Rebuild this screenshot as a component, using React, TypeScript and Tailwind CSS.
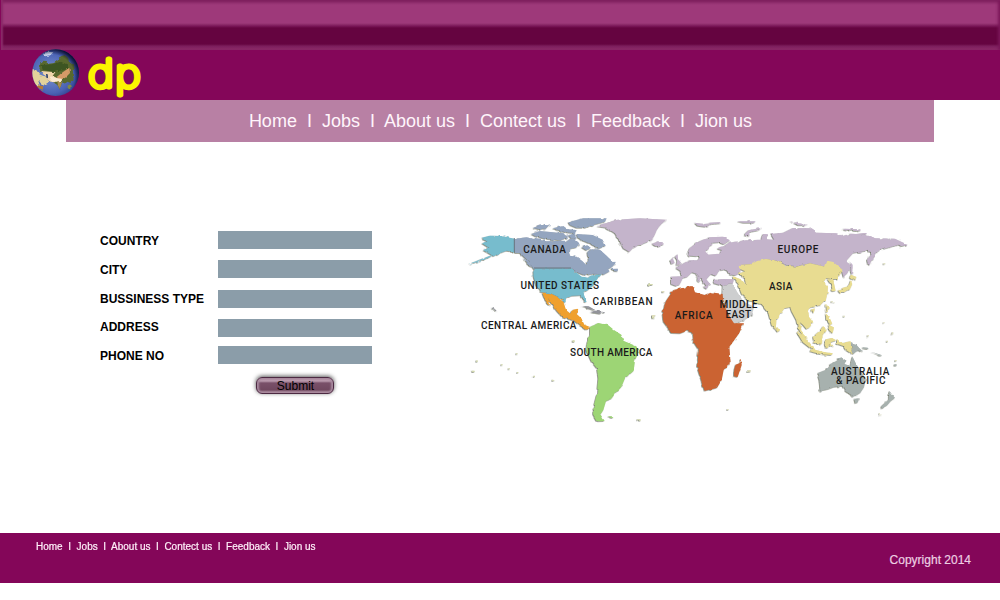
import React from "react";

const links = "Home  I  Jobs  I  About us  I  Contect us  I  Feedback  I  Jion us";

const labels = ["COUNTRY", "CITY", "BUSSINESS TYPE", "ADDRESS", "PHONE NO"];

function Globe() {
  return (
    <svg className="block h-12 w-12 shrink-0" viewBox="0 0 144 144">
      <defs>
        <radialGradient id="sea" cx="40%" cy="50%" r="60%">
          <stop offset="0" stopColor="#7e96d2" />
          <stop offset=".7" stopColor="#4a62b4" />
          <stop offset="1" stopColor="#2a3a86" />
        </radialGradient>
        <radialGradient id="shade" cx="40%" cy="60%" r="64%">
          <stop offset=".76" stopColor="#050824" stopOpacity="0" />
          <stop offset=".98" stopColor="#050824" stopOpacity=".95" />
        </radialGradient>
        <clipPath id="disc"><circle cx="71" cy="71" r="70" /></clipPath>
        <filter id="land" x="-10%" y="-10%" width="120%" height="120%">
          <feTurbulence type="fractalNoise" baseFrequency=".09" numOctaves="2" seed="4" />
          <feDisplacementMap in="SourceGraphic" scale="9" xChannelSelector="R" yChannelSelector="G" />
          <feGaussianBlur stdDeviation="1.3" />
        </filter>
      </defs>
      <g clipPath="url(#disc)">
        <rect width="144" height="144" fill="url(#sea)" />
        <g filter="url(#land)">
          <path d="M32 15L48 8L64 10L56 18L40 22Z" fill="#c3cfea" />
          <path d="M24 44L32 35L44 36L50 44L66 42L78 34L86 22L98 18L108 26L112 38L122 44L128 56L122 64L126 78L124 92L116 102L106 98L98 106L90 100L84 122L76 108L64 100L50 90L34 74L22 62Z" fill="#59692f" />
          <path d="M28 48L60 46L86 38L104 46L110 58L94 64L62 68L32 62Z" fill="#3c5420" />
          <path d="M0 60L12 62L22 76L36 82L50 94L46 106L36 110L28 104L18 92L24 112L12 108L0 94Z" fill="#e3d29b" />
          <path d="M28 66L54 68L70 70L62 80L76 88L68 100L56 98L42 88Z" fill="#f0d5ac" />
          <path d="M74 84L92 70L112 56L114 72L100 86L84 94Z" fill="#d69a68" />
          <path d="M52 82L70 86L92 90L82 98L62 98Z" fill="#fae9d0" />
          <path d="M76 96L90 98L84 120L78 110Z" fill="#a88a4c" />
          <path d="M14 108L34 112L32 122L20 118Z" fill="#b57a35" />
          <path d="M104 112L114 106L120 112L110 120Z" fill="#7f8a45" />
          <path d="M42 74L47 76L48 88L43 86Z" fill="#2c4268" />
        </g>
        <rect width="144" height="144" fill="url(#shade)" />
      </g>
    </svg>
  );
}

function WorldMap() {
  return (
    <svg className="block h-[220px] w-[460px] shrink-0" viewBox="0 0 460 220" fontFamily="Roboto, sans-serif" fontSize="10" fontWeight="500" fill="#1a1a1a">
      <defs>
        <filter id="coast" x="-5%" y="-5%" width="110%" height="110%">
          <feTurbulence type="fractalNoise" baseFrequency=".22" numOctaves="2" seed="8" />
          <feDisplacementMap in="SourceGraphic" scale="3" xChannelSelector="R" yChannelSelector="G" result="edge" />
          <feDropShadow in="edge" dx="-.7" dy=".6" stdDeviation=".35" floodColor="#424b35" floodOpacity=".8" />
        </filter>
      </defs>
      <g filter="url(#coast)">
        <g transform="scale(.33333)">
          <g fill="#77bccd">
            <path d="M66 83L90 77L125 78L163 86V125L140 122L120 128L101 139L84 128L70 121L85 112L66 100L82 95Z" />
            <path d="M101 135L84 144L64 151L44 158L28 161L50 153L78 141Z" />
            <path d="M220 175H335L350 188L365 200L385 203L400 195L425 193L411 208L402 225L384 240L370 249L380 277L374 276L360 256L335 257L318 267L315 279L298 262L270 249L242 246L228 225L221 200Z" />
          </g>
          <g fill="#94a5bf">
            <path d="M163 86L200 82L230 88L260 94L320 92L345 88L358 100L350 112L334 116L328 126L330 137L350 140L367 153L379 165L386 150L382 130L395 118L420 119L440 137L454 151L468 158L456 171L440 179L425 193L400 191L375 196L355 188L335 175H220L205 153L181 130L163 125Z" />
            <path d="M325 37L370 25L440 25L435 35L400 44L376 53L350 53L330 45Z" />
            <path d="M350 72L398 75L428 89L437 107L415 116L398 104L374 94L354 85Z" />
            <path d="M214 72L240 63L280 67L309 70L325 82L300 91L256 86L226 79Z" />
            <path d="M220 53L245 45L270 46L262 54L238 58ZM278 55L310 48L323 58L350 60L345 69L316 67ZM324 77L345 69L350 82L335 89ZM365 112L382 106L393 114L379 121Z" />
            <path d="M420 183L444 177L449 184L430 194ZM453 177L474 176L473 184L458 183ZM190 145L210 158L217 173L202 162Z" />
          </g>
          <g fill="#c4b4cb">
            <path d="M412 49L440 38L471 29L540 25L618 29L602 44L592 56L584 75L574 91L545 103L521 112L508 125L490 115L480 94L465 70L440 53Z" />
            <path d="M576 101L591 96L613 101L602 109L586 108Z" />
          </g>
          <path fill="#efa02e" d="M247 248L270 250L291 260L310 276L318 299L329 309L340 299L355 296L350 312L364 325L373 344L390 351L381 359L360 346L340 330L310 323L291 303L275 281L264 264L272 288L255 269Z" />
          <path fill="#92939a" d="M364 288L386 289L410 302L398 299ZM391 306L413 302L434 308L419 311ZM94 293L104 296L112 305L104 303Z" />
          <path fill="#9dd575" d="M390 351L415 339L445 346L463 361L484 374L490 392L529 409L537 426L525 450L521 482L495 505L484 531L466 550L454 566L438 573L430 600L420 616L431 633L410 634L399 615L401 590L411 551L415 505L411 475L395 455L379 421L381 400L390 375ZM446 619L462 619L458 624Z" />
          <path fill="#d3d9ad" d="M46 451h7v5h-7zM38 482h6v4h-6zM145 475h5v3h-5zM171 486h4v3h-4zM218 497h7v4h-7zM530 628h12v4h-12zM564 219h13v5h-13zM576 318h9v7h-9zM338 391h6v5h-6zM123 463h5v3h-5zM165 430h5v3h-5zM276 509h4v3h-4z" />
        </g>
        <g transform="translate(190) scale(.33333)">
          <g fill="#c4b4cb">
            <path d="M63 200L92 199L92 183L78 174L104 158L119 151L143 151L149 143L142 128L161 115L174 98L189 98L174 110L166 125L176 134L206 131L216 120L202 116L222 108L237 98L289 91L334 89L339 72L351 73L351 88L373 89L363 72L400 68L429 54L480 55L502 68L560 70L579 78L600 71L640 73L680 85L735 86L775 105L745 104L718 112L691 120L672 131L660 166L653 150L666 127L650 122L610 128L590 151L602 168L593 188L581 202L574 178L545 156L525 170L480 160L440 169L410 165L375 150L345 148L310 162L270 165L272 187L257 196L244 194L226 178L207 182L198 197L183 192L169 208L180 221L170 229L154 207L140 191L126 187L112 200L98 205L91 220L79 228L63 222Z" />
            <path d="M112 131L119 115L145 95L178 82L220 80L240 91L222 103L205 97L188 98L174 116L157 128L145 139L119 137Z" />
            <path d="M61 152L68 144L74 158L64 162ZM75 140L83 133L84 148L96 161L79 166L82 151ZM190 210L218 207L252 208L248 222L218 227L192 220Z" />
            <path d="M280 76L296 61L337 53L326 61L298 67L298 79ZM134 38L163 42L188 40L166 50L143 47ZM178 38L216 36L212 40L184 42ZM420 34L445 39L475 45L446 46ZM580 56L634 58L620 63L584 61ZM620 70L651 69L648 73ZM260 34L321 34L311 38L281 38ZM735 95L776 103L754 109ZM143 199L151 201L148 217L142 212ZM160 230L177 226L170 237Z" />
            <path d="M602 154L608 169L606 196L602 184ZM651 143L674 128L670 149L660 166L652 160Z" />
          </g>
          <path fill="#e8dc91" d="M265 165L301 163L318 155L345 147L375 150L409 168L440 170L480 160L525 170L532 152L550 156L578 180L562 207L545 207L529 204L521 215L534 229L533 247L527 268L511 285L488 291L472 296L478 322L490 338L479 351L472 359L459 344L450 337L455 363L473 383L461 380L444 354L439 330L425 304L421 291L403 295L391 313L379 335L377 359L365 345L354 304L335 282L301 275L275 251L262 218L247 198L276 209L288 226L285 205L265 191L286 184L269 176Z" />
          <path fill="#e8dc91" d="M532 207L550 211L557 242L548 244L545 226ZM563 241L580 233L596 229L602 211L607 222L599 239L571 250ZM599 203L603 194L620 201L611 212ZM486 299L495 295L491 310ZM529 281L536 293L531 309ZM381 350L387 358L384 367L378 360ZM439 364L459 375L478 397L491 414L482 415L459 397ZM485 416L518 425L549 430L544 435L510 432L480 424ZM489 380L509 363L520 348L527 360L518 376L516 402L493 398ZM524 389L546 384L559 391L541 397L552 410L537 403L533 414L525 412ZM527 310L538 321L547 341L540 343L529 330ZM538 346L552 352L548 370L535 358ZM561 387L576 399L602 394L606 431L587 419L579 407L561 401Z" />
          <path fill="#cdcecf" d="M218 228L250 223L261 245L281 275L312 290L305 315L286 327L249 346L238 321L225 290L217 255Z" />
          <path fill="#cb6331" d="M71 240L128 228L135 247L164 255L183 247L218 252L218 267L226 290L240 322L252 340L279 340L265 373L238 410L242 460L221 479L215 510L201 533L164 542L154 510L141 469L147 420L131 395L129 368L111 362L91 370L66 369L40 334L37 304L49 272ZM272 443L275 465L263 501L252 498L252 483L257 464L269 460Z" />
          <path fill="#a7b1ae" d="M603 396L619 404L639 425L624 421L607 432ZM638 412L654 413L650 417L638 415ZM502 490L529 479L540 463L560 453L574 442L586 450L584 462L601 468L607 439L619 463L632 482L647 508L642 532L627 554L608 557L587 544L577 527L553 530L535 537L511 542L509 514ZM613 567L626 565L624 577L616 580ZM718 542L728 556L735 563L723 572L712 585L695 596L694 589L716 569ZM666 426L697 436L692 437ZM733 463h7v4h-7z" />
          <path fill="#dfdfbc" d="M36 243h7v4h-7zM6 315h10v6H6zM293 480h9v5h-9zM231 597h5v3h-5zM735 450h5v4h-5zM652 376h5v3h-5zM710 392h5v4h-5zM725 370h5v4h-5zM700 337h4v3h-4zM687 613h7v3h-7zM547 273h6v4h-6zM580 317h5v3h-5zM700 160h6v3h-6z" />
        </g>
      </g>
      <path d="M54.3 28V42M74 58H111" stroke="#657179" strokeWidth=".9" />
      <g>
        <text x="63.3" y="43" textLength="42.5" lengthAdjust="spacing">CANADA</text>
        <text x="60.5" y="78.5" textLength="78.5">UNITED STATES</text>
        <text x="132.5" y="95.3" textLength="60">CARIBBEAN</text>
        <text x="21" y="119" textLength="95.5">CENTRAL AMERICA</text>
        <text x="110" y="146" textLength="82.5">SOUTH AMERICA</text>
        <text x="317.5" y="43" textLength="41">EUROPE</text>
        <text x="309" y="80.3" textLength="23.5">ASIA</text>
        <text x="259.5" y="98" textLength="38">MIDDLE</text>
        <text x="265.5" y="108" textLength="25.5">EAST</text>
        <text x="214.7" y="109.2" textLength="38">AFRICA</text>
        <text x="371" y="164.5" textLength="58.5">AUSTRALIA</text>
        <text x="376" y="174.3" textLength="49.5">&amp; PACIFIC</text>
      </g>
    </svg>
  );
}

export default function App() {
  return (
    <div className="flex h-[600px] w-[1000px] flex-col overflow-hidden bg-white font-['Liberation_Sans',sans-serif]">
      <header className="h-[100px] shrink-0 bg-[#840659]">
        <div className="ml-px h-[50px] bg-[linear-gradient(to_bottom,#7b1e5d_0,#92306f_3px,#9e397a_5px,#9e397a_23px,#92316f_24px,#7b1759_26px,#650440_28px,#650440_44px,#7b1d5b_46px,#91316e_50px)] shadow-[inset_2px_0_2px_#8b2b69,inset_-2px_0_3px_#7b1759]" />
        <div className="flex h-[50px] pl-8">
          <div className="-mt-[1px]"><Globe /></div>
          <svg className="ml-2 block h-[50px] w-16" viewBox="0 0 64 50">
            <text transform="scale(1.16 1)" x=".2" y="36.8" letterSpacing="1.5" fontFamily="Inter, sans-serif" fontWeight="100" fontSize="37.5" fill="#fbf500" stroke="#fbf500" strokeWidth="4.8" strokeLinejoin="round">dp</text>
          </svg>
        </div>
      </header>
      <nav className="mx-[66px] flex h-[42px] shrink-0 items-center justify-center bg-[#b880a4] pl-px text-[18px] whitespace-pre text-[#fff5fb]">
        {links}
      </nav>
      <main className="flex h-[391px] shrink-0 items-start">
        <form className="ml-[100px] flex w-[272px] flex-wrap pt-[84px]">
          <div className="flex w-[118px] flex-col pt-px text-[12px] font-bold text-black">
            {labels.map((label) => (
              <label key={label} className="h-[28.8px] leading-[29px] whitespace-nowrap">{label}</label>
            ))}
          </div>
          <div className="flex w-[154px] flex-col pt-[5px]">
            <div className="h-[18px] bg-[#8b9da9]" />
            <div className="mt-[11px] h-[18px] bg-[#8b9da9]" />
            <div className="mt-3 h-[18px] bg-[#8b9da9]" />
            <div className="mt-[11px] h-[18px] bg-[#8b9da9]" />
            <div className="mt-[9px] h-[18px] bg-[#8b9da9]" />
          </div>
          <button type="button" className="mt-[6px] ml-[156px] flex h-[17px] w-[78px] items-center justify-center rounded-[6px] border border-[#4c2942] bg-[linear-gradient(to_bottom,#a58499_0,#bc9caf_3px,#795069_5px,#70485f_12px,#aa8b9e_14px)] text-[12px] leading-[14px] text-black shadow-[0_-1px_4px_#555,inset_3px_0_2px_-1px_#a98ba0,inset_-3px_0_2px_-1px_#a98ba0]">
            <span className="pt-px pl-px">Submit</span>
          </button>
        </form>
        <div className="ml-[88px] pt-[68px]"><WorldMap /></div>
      </main>
      <footer className="flex h-[50px] shrink-0 justify-between bg-[#840659]">
        <div className="origin-top scale-y-110 pt-[6px] pl-9 text-[10px] leading-3 whitespace-pre text-[#fff0f9] [-webkit-text-stroke:.2px_#fff0f9]">{links}</div>
        <div className="pt-[20px] pr-[29px] text-[12px] leading-[15px] text-[#edcfe2] [-webkit-text-stroke:.2px_#edcfe2]">Copyright 2014</div>
      </footer>
    </div>
  );
}
